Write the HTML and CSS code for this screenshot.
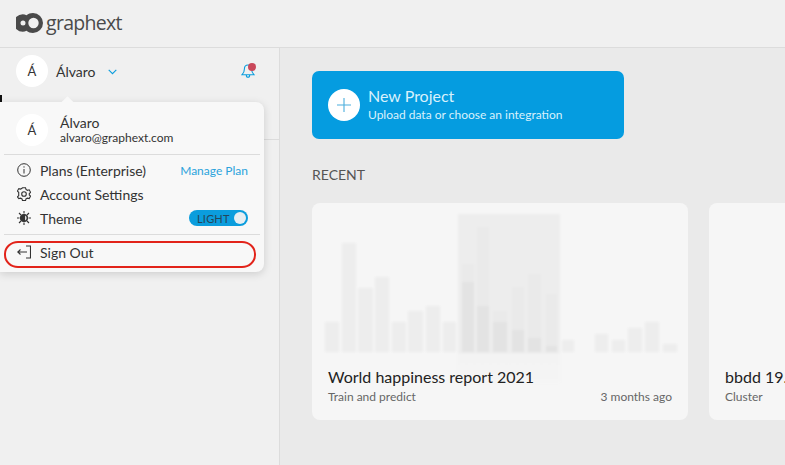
FILE: index.html
```html
<!DOCTYPE html>
<html lang="en">
<head>
  <meta charset="UTF-8" />
  <title>Graphext</title>
  <link rel="stylesheet" href="styles.css">
</head>
<body>
  <header class="topbar">
    <svg class="logo-mark" width="27" height="20" viewBox="0 0 27 20">
      <path fill="#4a4a4a" fill-rule="evenodd" d="M17 0a10 10 0 1 1 0 20c-2.800 0-4.500-.8-6.500-2.200c-1.200 .6-2.500 1-3.800 1a8.700 8.700 0 0 1 0-17.600c1.300 0 2.600 .4 3.800 1C12.500 .8 14.200 0 17 0zM7 7.500a2.500 2.500 0 1 0 0 5a2.500 2.500 0 0 0 0-5zM17.500 4.800a5.200 5.200 0 1 0 0 10.400a5.200 5.200 0 0 0 0-10.400z"/>
    </svg>
    <span class="logo-text">graphext</span>
  </header>

  <div class="layout">
    <aside class="sidebar">
      <div class="user-row">
        <div class="avatar">Á</div>
        <span class="user-name">Álvaro</span>
        <svg class="chevron" width="9" height="6" viewBox="0 0 9 6"><path d="M.7 .8L4.500 4.600L8.300 .8" fill="none" stroke="#0b9ddd" stroke-width="1.100"/></svg>
        <span class="bell">
          <svg width="14" height="16" viewBox="0 0 14 16"><path d="M7 2c-2.400 0-3.600 1.800-3.600 4c0 2.800-.9 4.300-2.300 5.700h11.800C11.500 10.300 10.600 8.800 10.600 6c0-2.200-1.200-4-3.600-4zM5.300 11.900c0 1.400 .7 2.300 1.700 2.300s1.700-.9 1.700-2.300" fill="none" stroke="#0b9ddd" stroke-width="1.100"/></svg>
          <i class="bell-dot"></i>
        </span>
      </div>
      <div class="side-rule"></div>

      <span class="cursor-mark"></span>
      <div class="popover">
        <span class="popover-tip"></span>
        <div class="pop-user">
          <div class="avatar">Á</div>
          <div>
            <div class="pop-name">Álvaro</div>
            <div class="pop-mail">alvaro@graphext.com</div>
          </div>
        </div>
        <div class="pop-section">
          <div class="pop-item">
            <svg class="pop-icon" width="14" height="14" viewBox="0 0 14 14" fill="none" stroke="#333" stroke-width="1"><circle cx="7" cy="7" r="6.300"/><path d="M7 6v4.500M7 3.300v1.300"/></svg>
            <span>Plans (Enterprise)</span>
            <a class="pop-link">Manage Plan</a>
          </div>
          <div class="pop-item">
            <svg class="pop-icon" width="14" height="14" viewBox="0 0 14 14" fill="none" stroke="#333" stroke-width="1.100"><path d="M5.500 .8h3l.5 1.700l1.400 .8l1.800-.5l1.400 2.500l-1.300 1.200v1.400l1.300 1.200l-1.400 2.500l-1.800-.5l-1.400 .8l-.5 1.700h-3l-.5-1.700l-1.400-.8l-1.800 .5L.4 9.900l1.300-1.200V5.300L.4 4.100l1.400-2.500l1.800 .5L5 1.300z"/><circle cx="7" cy="7" r="2.300"/></svg>
            <span>Account Settings</span>
          </div>
          <div class="pop-item">
            <svg class="pop-icon" width="14" height="14" viewBox="0 0 14 14" fill="none" stroke="#333" stroke-width="1.100"><path d="M7 0v2.500M7 11.500V14M0 7h2.500M11.500 7H14M2 2l2 2M10 10l2 2M12 2l-2 2M4 10l-2 2"/><circle cx="7" cy="7" r="3.500" fill="#333"/><path d="M8 4.500a2.700 2.700 0 0 1 0 5z" fill="#ddd" stroke="none"/></svg>
            <span>Theme</span>
            <div class="toggle"><span class="toggle-label">LIGHT</span><i class="toggle-knob"></i></div>
          </div>
        </div>
        <div class="pop-signout">
          <svg class="pop-icon" width="14" height="14" viewBox="0 0 14 14" fill="none" stroke="#333" stroke-width="1.100"><path d="M9 1h4.500v12H9M10 7H.8M3.500 4.500L.8 7l2.700 2.500"/></svg>
          <span>Sign Out</span>
        </div>
      </div>
    </aside>

    <main class="content">
      <div class="new-project">
        <div class="plus-circle">
          <svg width="14" height="14" viewBox="0 0 14 14"><path d="M7 0v14M0 7h14" stroke="#4aaedd" stroke-width="1.100"/></svg>
        </div>
        <div>
          <div class="np-title">New Project</div>
          <div class="np-sub">Upload data or choose an integration</div>
        </div>
      </div>

      <h2 class="recent">RECENT</h2>

      <div class="cards">
        <div class="card">
          <svg class="chart" width="376" height="180" viewBox="312 203 376 180">
            <defs>
              <linearGradient id="bandFade" x1="0" y1="0" x2="0" y2="1">
                <stop offset="0.820" stop-color="#ededed"/>
                <stop offset="0.830" stop-color="#f3f3f3"/>
                <stop offset="1" stop-color="#f5f5f5"/>
              </linearGradient>
            </defs>
            <rect fill="url(#bandFade)" x="458" y="214" width="102" height="169"/>
            <g class="bar-a">
              <rect x="325" y="322" width="14" height="30"/>
              <rect x="342" y="243" width="14" height="109"/>
              <rect x="358" y="288" width="15" height="64"/>
              <rect x="375" y="277" width="14" height="75"/>
              <rect x="392" y="322" width="14" height="30"/>
              <rect x="408" y="311" width="15" height="41"/>
              <rect x="426" y="306" width="14" height="46"/>
              <rect x="443" y="322" width="13" height="30"/>
              <rect x="462" y="264" width="12" height="88"/>
              <rect x="477" y="227" width="12" height="125"/>
              <rect x="493" y="311" width="14" height="41"/>
              <rect x="512" y="287" width="12" height="65"/>
              <rect x="528" y="274" width="13" height="78"/>
              <rect x="546" y="294" width="11" height="58"/>
              <rect x="562" y="340" width="12" height="12"/>
              <rect x="595" y="334" width="13" height="18"/>
              <rect x="612" y="340" width="13" height="12"/>
              <rect x="628" y="328" width="14" height="24"/>
              <rect x="645" y="322" width="14" height="30"/>
              <rect x="663" y="344" width="14" height="8"/>
            </g>
            <g class="bar-b">
              <rect x="462" y="282" width="12" height="70"/>
              <rect x="477" y="306" width="12" height="46"/>
              <rect x="493" y="322" width="14" height="30"/>
              <rect x="512" y="330" width="12" height="22"/>
              <rect x="528" y="338" width="13" height="14"/>
              <rect x="546" y="346" width="11" height="6"/>
            </g>
          </svg>
          <div class="card-body">
            <div class="card-title">World happiness report 2021</div>
            <div class="card-meta"><span>Train and predict</span><span>3 months ago</span></div>
          </div>
        </div>
        <div class="card card-cut">
          <div class="card-body">
            <div class="card-title">bbdd 19.</div>
            <div class="card-meta"><span>Cluster</span></div>
          </div>
        </div>
      </div>
    </main>
  </div>
</body>
</html>
```

FILE: styles.css
```css
* { margin: 0; padding: 0; box-sizing: border-box; }
html, body { height: 100%; overflow: hidden; }
body {
  font-family: 'Lato', sans-serif;
  background-color: #eaeaea;
  color: #333;
  font-size: 14px;
}
.topbar {
  height: 48px;
  display: flex;
  align-items: center;
  gap: 3px;
  padding: 0 0 2px 16px;
  background-color: #f0f0f0;
  border-bottom: 1px solid #dcdcdc;
}
.logo-text { font-family: 'Open Sans', sans-serif; font-size: 19.500px; font-weight: 500; color: #4a4a4a; letter-spacing: -0.7px; }
.layout { display: flex; height: 417px; }

.sidebar {
  width: 280px;
  position: relative;
  background-color: #f0f0f0;
  border-right: 1px solid #dcdcdc;
}
.user-row {
  height: 46px;
  display: flex;
  align-items: center;
  padding: 0 24px 0 16px;
}
.avatar {
  width: 32px;
  height: 32px;
  border-radius: 50%;
  background-color: #fff;
  display: flex;
  align-items: center;
  justify-content: center;
  font-size: 13px;
  color: #333;
  flex-shrink: 0;
}
.user-name { margin-left: 8px; font-size: 14px; }
.chevron { margin-left: 12px; margin-top: 1px; }
.bell { margin-left: auto; position: relative; display: flex; }
.bell-dot {
  position: absolute;
  top: 0;
  right: -1px;
  width: 8px;
  height: 8px;
  border-radius: 50%;
  background-color: #c9485a;
}
.side-rule { margin-top: 45px; height: 1px; background-color: #dcdcdc; }
.cursor-mark { position: absolute; left: 0; top: 47px; width: 2px; height: 10px; background-color: #111; }

.popover {
  position: absolute;
  left: 0;
  top: 54px;
  width: 264px;
  height: 170px;
  background-color: #f8f8f8;
  border-radius: 0 8px 8px 0;
  box-shadow: 0 2px 8px rgba(0, 0, 0, 0.15);
  padding: 0 4px;
}
.popover-tip {
  position: absolute;
  top: -4px;
  left: 63px;
  width: 9px;
  height: 9px;
  background-color: #f8f8f8;
  transform: rotate(45deg);
}
.pop-user {
  height: 53px;
  display: flex;
  align-items: center;
  gap: 12px;
  padding: 4px 0 0 12px;
  border-bottom: 1px solid #dcdcdc;
  position: relative;
}
.pop-name { font-size: 14px; line-height: 16px; }
.pop-mail { font-size: 12px; line-height: 14px; }
.pop-section {
  padding: 3px 0 4px;
  border-bottom: 1px solid #dcdcdc;
}
.pop-item {
  height: 24px;
  display: flex;
  align-items: center;
  padding: 0 12px 0 13px;
  font-size: 14px;
}
.pop-icon { margin-right: 9px; flex-shrink: 0; }
.pop-link { margin-left: auto; color: #2ba3dc; font-size: 12px; }
.toggle {
  margin-left: auto;
  width: 59px;
  height: 16px;
  border-radius: 8px;
  background-color: #0b9ddd;
  display: flex;
  align-items: center;
  justify-content: space-between;
  padding: 0 2px 0 8px;
}
.toggle-label { font-size: 11px; color: #24465a; letter-spacing: 0.2px; }
.toggle-knob { width: 12px; height: 12px; border-radius: 50%; background-color: #e6eef2; }
.pop-signout {
  height: 27px;
  margin: 6px 4px 0 0;
  display: flex;
  align-items: center;
  padding: 0 0 5px 11px;
  font-size: 14px;
  border: 2px solid #e2231a;
  border-radius: 14px / 13px;
}

.content { flex: 1; padding: 23px 0 0 32px; overflow: hidden; }
.new-project {
  width: 312px;
  height: 68px;
  border-radius: 7px;
  background-color: #059ce0;
  color: #d8f1fc;
  display: flex;
  align-items: center;
  gap: 8px;
  padding-left: 16px;
}
.plus-circle {
  width: 32px;
  height: 32px;
  border-radius: 50%;
  background-color: #fff;
  display: flex;
  align-items: center;
  justify-content: center;
}
.np-title { font-size: 16px; line-height: 19px; }
.np-sub { font-size: 12px; line-height: 19px; }
.recent { margin-top: 27px; font-size: 14px; font-weight: 400; line-height: 18px; color: #555; }
.cards { display: flex; gap: 21px; margin-top: 19px; width: 700px; }
.card {
  width: 376px;
  height: 217px;
  flex-shrink: 0;
  border-radius: 8px;
  background-color: #f6f6f6;
  position: relative;
  display: flex;
  flex-direction: column;
  justify-content: flex-end;
  overflow: hidden;
}
.chart { position: absolute; left: 0; top: 0; filter: blur(1.200px); }
.bar-a rect { fill: #e8e8e8; fill-opacity: 0.6; }
.bar-b rect { fill: #dcdcdc; fill-opacity: 0.55; }
.card-body { position: relative; padding: 0 16px 16px; }
.card-title { font-size: 16px; line-height: 20px; color: #222; position: relative; top: 1px; }
.card-meta { display: flex; justify-content: space-between; margin-top: 3px; font-size: 12px; line-height: 15px; color: #666; }
```
